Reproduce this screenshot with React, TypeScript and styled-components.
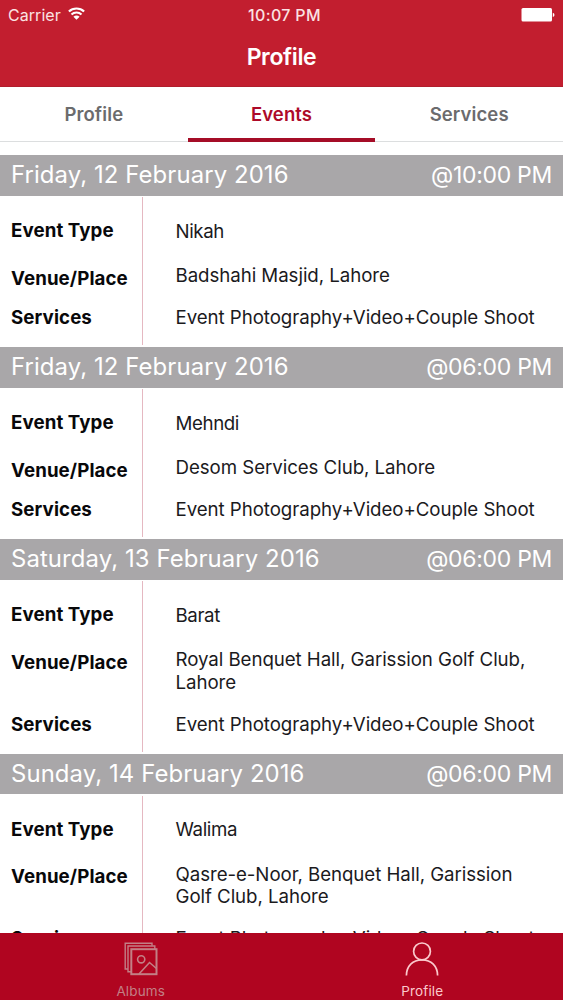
import React from "react";
import styled, { createGlobalStyle } from "styled-components";

const GlobalStyle = createGlobalStyle`
  * { box-sizing: border-box; }
  body { margin: 0; background: #fff; overflow: hidden; }
`;

const Screen = styled.div`
  width: 563px;
  height: 1000px;
  display: flex;
  flex-direction: column;
  overflow: hidden;
  background: #fff;
  font-family: Inter, "Liberation Sans", sans-serif;
  white-space: nowrap;
`;

const Header = styled.header`
  flex: none;
  height: 87px;
  background: #c21e2f;
  border-bottom: 1px solid #b01e2d;
  color: #fff;
`;

const StatusBar = styled.div`
  display: grid;
  grid-template-columns: 1fr auto 1fr;
  align-items: center;
  height: 28px;
  padding: 1px 8px 0;
  color: #fbe3e3;
`;

const Carrier = styled.div`
  display: flex;
  align-items: center;
  gap: 7px;
  font-size: 16px;
  letter-spacing: 0.05px;

  svg { margin-bottom: 2px; color: #fff; }
`;

const Clock = styled.div`
  font-size: 16px;
  font-weight: 500;
  letter-spacing: 0.35px;
  padding-left: 6px;
`;

const BatterySlot = styled.div`
  display: flex;
  justify-content: flex-end;
`;

const Title = styled.h1`
  margin: 0;
  height: 58px;
  text-align: center;
  font-size: 23px;
  line-height: 58px;
  font-weight: 600;
  letter-spacing: -0.35px;
`;

const Tabs = styled.nav`
  flex: none;
  display: grid;
  grid-template-columns: repeat(3, 1fr);
  height: 55px;
  border-bottom: 1px solid #dcdedf;
`;

const Tab = styled.div<{ $active?: boolean }>`
  height: 55px;
  text-align: center;
  font-size: 18.5px;
  line-height: 55px;
  font-weight: 600;
  letter-spacing: 0.1px;
  color: ${(p) => (p.$active ? "#ad0a29" : "#6b6b6d")};
  box-shadow: ${(p) => (p.$active ? "inset 0 -4px 0 #a50d27" : "none")};
`;

const EventList = styled.main`
  flex: 1;
  min-height: 0;
  overflow: hidden;
  padding-top: 13px;
`;

const EventHeader = styled.div`
  display: flex;
  justify-content: space-between;
  height: 40.5px;
  padding: 0 11px;
  background: #a9a7a9;
  color: #fff;
  line-height: 40px;
`;

const DateText = styled.span`
  font-size: 23.9px;
  letter-spacing: 0.1px;
`;

const TimeText = styled.span`
  font-size: 23px;
  letter-spacing: -0.3px;
`;

const EventBody = styled.div`
  display: grid;
  grid-template-columns: 142px 1px 1fr;
  padding: 1.5px 0 2px;
`;

const Rule = styled.div`
  background: #e5b8c1;
`;

const Column = styled.div<{ $value?: boolean }>`
  display: grid;
  grid-template-rows: 45px ${(p) => (p.$value ? "auto" : "1fr")} 38px;
  padding: 23px 0 0 ${(p) => (p.$value ? "32.5px" : "11px")};
  font-size: 18.7px;
  line-height: 22.5px;
  letter-spacing: ${(p) => (p.$value ? "-0.06px" : "0.1px")};
  color: ${(p) => (p.$value ? "#1b1a1d" : "#08080a")};
  font-weight: ${(p) => (p.$value ? 400 : 700)};
`;

const Cell = styled.div<{ $shift?: number; $below?: number; $tight?: boolean }>`
  padding-top: ${(p) => p.$shift ?? 0}px;
  padding-bottom: ${(p) => p.$below ?? 0}px;
  letter-spacing: ${(p) => (p.$tight ? "-0.4px" : "inherit")};
  white-space: pre-line;
`;

const TabBar = styled.footer`
  flex: none;
  display: grid;
  grid-template-columns: 1fr 1fr;
  height: 67px;
  background: #b00520;
`;

const TabBarItem = styled.div<{ $active?: boolean }>`
  display: flex;
  flex-direction: column;
  align-items: center;
  padding-top: 9px;
  color: ${(p) => (p.$active ? "#fbc9cc" : "#c37f85")};
  font-size: 13.5px;
  line-height: 16px;
  letter-spacing: 0.15px;

  svg { display: block; margin-bottom: 7px; }
`;

const WifiIcon = () => (
  <svg width="17" height="13" viewBox="0 0 17 13" fill="none" stroke="currentColor">
    <path d="M.9 4.5C5.1 .5 11.9 .5 16.1 4.5" strokeWidth="2.2" />
    <path d="M3.5 7.4C6.2 4.8 10.8 4.8 13.5 7.4" strokeWidth="2.1" />
    <path d="M5.4 9.7C7.2 8.1 9.8 8.1 11.6 9.7L8.5 12.8Z" fill="currentColor" stroke="none" />
  </svg>
);

const BatteryIcon = () => (
  <svg width="34" height="14" viewBox="0 0 34 14" fill="#fff">
    <rect x="0.5" y="0" width="30.5" height="13.5" rx="1.5" />
    <path d="M31.8 4.8Q33.5 5.3 33.5 6.9Q33.5 8.5 31.8 9Z" />
  </svg>
);

const AlbumsIcon = () => (
  <svg width="34" height="34" viewBox="0 0 34 34" fill="none" stroke="currentColor" strokeWidth="1.4">
    <path d="M4 27H1.2V1.2H28V3.8" />
    <path d="M7 29.8H4V4H30.8V7" />
    <rect x="7.3" y="7.2" width="25.2" height="25" strokeWidth="2" />
    <circle cx="17.2" cy="17.3" r="3.6" strokeWidth="1.6" />
    <path d="M15 32L25.5 20.5L32.5 26.5" strokeWidth="1.6" />
  </svg>
);

const PersonIcon = () => (
  <svg width="34" height="34" viewBox="0 0 34 34" fill="none" stroke="currentColor" strokeWidth="1.7">
    <circle cx="17" cy="9.4" r="8.4" />
    <path d="M1.4 33.5C1.4 24 7.8 17.8 17 17.8S32.6 24 32.6 33.5" />
  </svg>
);

const SERVICES = "Event Photography+Video+Couple Shoot";

const events = [
  { date: "Friday, 12 February 2016", time: "@10:00 PM", type: "Nikah", venue: "Badshahi Masjid, Lahore" },
  { date: "Friday, 12 February 2016", time: "@06:00 PM", type: "Mehndi", venue: "Desom Services Club, Lahore" },
  { date: "Saturday, 13 February 2016", time: "@06:00 PM", type: "Barat", venue: "Royal Benquet Hall, Garission Golf Club,\nLahore" },
  { date: "Sunday, 14 February 2016", time: "@06:00 PM", type: "Walima", venue: "Qasre-e-Noor, Benquet Hall, Garission\nGolf Club, Lahore" },
];

export default function App() {
  return (
    <Screen>
      <GlobalStyle />
      <Header>
        <StatusBar>
          <Carrier>Carrier <WifiIcon /></Carrier>
          <Clock>10:07 PM</Clock>
          <BatterySlot><BatteryIcon /></BatterySlot>
        </StatusBar>
        <Title>Profile</Title>
      </Header>
      <Tabs>
        <Tab>Profile</Tab>
        <Tab $active>Events</Tab>
        <Tab>Services</Tab>
      </Tabs>
      <EventList>
        {events.map((e) => (
          <section key={e.date + e.type}>
            <EventHeader>
              <DateText>{e.date}</DateText>
              <TimeText>{e.time}</TimeText>
            </EventHeader>
            <EventBody>
              <Column>
                <Cell>Event Type</Cell>
                <Cell $shift={2.5}>Venue/Place</Cell>
                <Cell>Services</Cell>
              </Column>
              <Rule />
              <Column $value>
                <Cell $shift={0.5} $tight>{e.type}</Cell>
                <Cell $below={19.5}>{e.venue}</Cell>
                <Cell>{SERVICES}</Cell>
              </Column>
            </EventBody>
          </section>
        ))}
      </EventList>
      <TabBar>
        <TabBarItem><AlbumsIcon />Albums</TabBarItem>
        <TabBarItem $active><PersonIcon />Profile</TabBarItem>
      </TabBar>
    </Screen>
  );
}
